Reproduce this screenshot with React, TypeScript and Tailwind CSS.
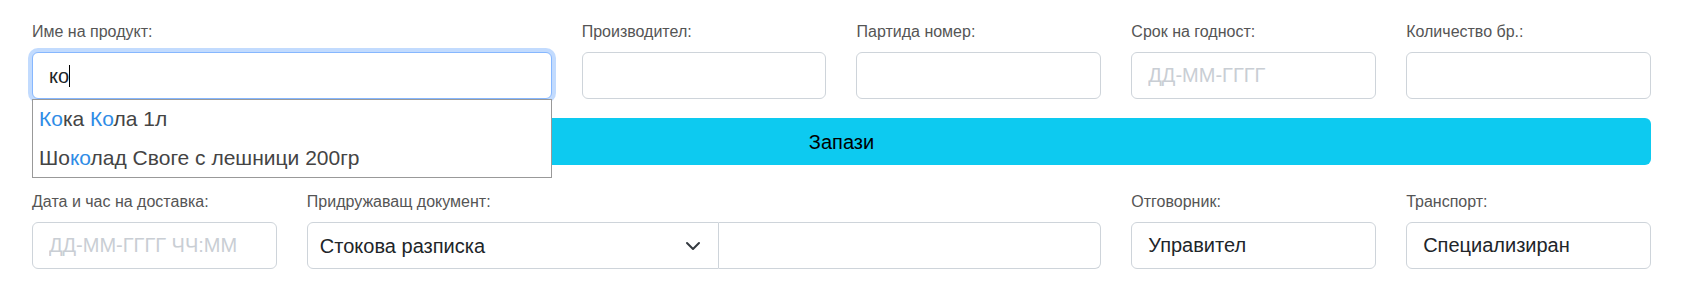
import React from "react";

const inputCls =
  "block w-full h-[47px] px-4 text-[20px] leading-[30px] text-[#212529] bg-white border border-[#ced4da] rounded-md outline-none placeholder:text-[#c9ced4]";

function Label({ children }: { children: React.ReactNode }) {
  return <label className="block mb-2 text-base leading-6 text-[#555]">{children}</label>;
}

function Field({ label, value, placeholder }: { label: string; value?: string; placeholder?: string }) {
  return (
    <div>
      <Label>{label}</Label>
      <input type="text" defaultValue={value} placeholder={placeholder} className={inputCls} />
    </div>
  );
}

function Hl({ children }: { children: React.ReactNode }) {
  return <span className="text-[#2f8ce6]">{children}</span>;
}

export default function App() {
  return (
    <div className="min-h-screen bg-white px-8 pt-5 font-['Liberation_Sans',Arial,sans-serif]">
      <div className="grid grid-cols-6 gap-x-[30px]">
        {/* Product name with autocomplete */}
        <div className="col-span-2 relative">
          <Label>Име на продукт:</Label>
          <div className="h-[47px] px-4 flex items-center text-[20px] text-[#212529] bg-white border border-[#86b7fe] rounded-md shadow-[0_0_0_4px_rgba(13,110,253,0.25)]">
            <span>ко</span>
            <span className="inline-block w-px h-[22px] bg-black"></span>
          </div>
          <ul className="absolute left-0 right-0 top-[79px] z-10 bg-white border border-[#999] text-[21px] text-[#444]">
            <li className="px-[6px] py-[5px] leading-[28.5px]">
              <Hl>Ко</Hl>ка <Hl>Ко</Hl>ла 1л
            </li>
            <li className="px-[6px] py-[5px] leading-[28.5px]">
              Шо<Hl>ко</Hl>лад Своге с лешници 200гр
            </li>
          </ul>
        </div>
        <Field label="Производител:" />
        <Field label="Партида номер:" />
        <Field label="Срок на годност:" placeholder="ДД-ММ-ГГГГ" />
        <Field label="Количество бр.:" />
      </div>

      <button
        type="button"
        className="mt-[19px] block w-full h-[47px] rounded-md bg-[#0dcaf0] text-[20px] text-black"
      >
        Запази
      </button>

      <div className="mt-[25px] grid grid-cols-6 gap-x-[30px]">
        <Field label="Дата и час на доставка:" placeholder="ДД-ММ-ГГГГ ЧЧ:ММ" />
        <div className="col-span-3">
          <Label>Придружаващ документ:</Label>
          <div className="flex h-[47px]">
            <div className="w-[412px] flex items-center justify-between pl-3 pr-[17px] text-[20px] text-[#212529] border border-[#ced4da] rounded-l-md">
              <span>Стокова разписка</span>
              <svg width="16" height="16" viewBox="0 0 16 16" fill="none">
                <path d="m2 5 6 6 6-6" stroke="#343a40" strokeWidth="2" strokeLinecap="round" strokeLinejoin="round" />
              </svg>
            </div>
            <input
              type="text"
              className="flex-1 min-w-0 h-full px-4 text-[20px] text-[#212529] border border-l-0 border-[#ced4da] rounded-r-md outline-none"
            />
          </div>
        </div>
        <Field label="Отговорник:" value="Управител" />
        <Field label="Транспорт:" value="Специализиран" />
      </div>
    </div>
  );
}
